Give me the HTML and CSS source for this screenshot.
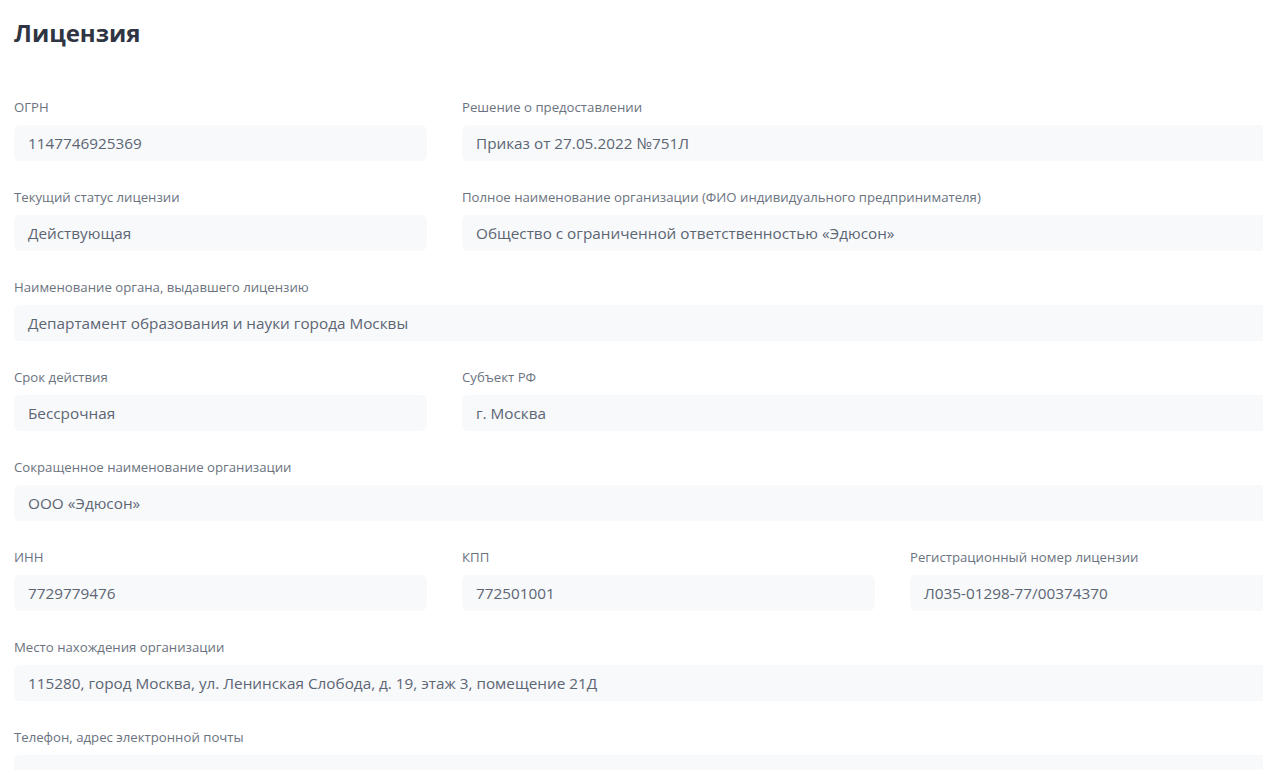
FILE: index.html
```html
<!DOCTYPE html>
<html lang="ru">
<head>
<meta charset="utf-8">
<title>Лицензия</title>
<link rel="stylesheet" href="styles.css">
</head>
<body>
<div class="page">
  <h1 class="title">Лицензия</h1>
  <div class="grid">
    <div class="field"><div class="label">ОГРН</div><div class="value">1147746925369</div></div>
    <div class="field span2"><div class="label">Решение о предоставлении</div><div class="value">Приказ от 27.05.2022 №751Л</div></div>

    <div class="field"><div class="label">Текущий статус лицензии</div><div class="value">Действующая</div></div>
    <div class="field span2"><div class="label">Полное наименование организации (ФИО индивидуального предпринимателя)</div><div class="value">Общество с ограниченной ответственностью «Эдюсон»</div></div>

    <div class="field span3"><div class="label">Наименование органа, выдавшего лицензию</div><div class="value">Департамент образования и науки города Москвы</div></div>

    <div class="field"><div class="label">Срок действия</div><div class="value">Бессрочная</div></div>
    <div class="field span2"><div class="label">Субъект РФ</div><div class="value">г. Москва</div></div>

    <div class="field span3"><div class="label">Сокращенное наименование организации</div><div class="value">ООО «Эдюсон»</div></div>

    <div class="field"><div class="label">ИНН</div><div class="value">7729779476</div></div>
    <div class="field"><div class="label">КПП</div><div class="value">772501001</div></div>
    <div class="field"><div class="label">Регистрационный номер лицензии</div><div class="value">Л035-01298-77/00374370</div></div>

    <div class="field span3"><div class="label">Место нахождения организации</div><div class="value">115280, город Москва, ул. Ленинская Слобода, д. 19, этаж 3, помещение 21Д</div></div>

    <div class="field span3"><div class="label">Телефон, адрес электронной почты</div><div class="value"></div></div>
  </div>
</div>
</body>
</html>
```
FILE: styles.css
```css
html, body {
  margin: 0;
  padding: 0;
  background: #ffffff;
  overflow: hidden;
}
body {
  font-family: "Open Sans", "Noto Sans", sans-serif;
}
.page {
  padding: 17px 0 0 14px;
  width: 1309px;
}
.title {
  margin: 0 0 49px 0;
  font-size: 24px;
  line-height: 32px;
  font-weight: 700;
  color: #2f3542;
}
.grid {
  display: grid;
  grid-template-columns: 413px 413px 413px;
  column-gap: 35px;
  row-gap: 27px;
}
.span2 { grid-column: span 2; }
.span3 { grid-column: span 3; }
.label {
  font-size: 13.2px;
  line-height: 18px;
  color: #6b7380;
  margin-bottom: 9px;
  white-space: nowrap;
}
.value {
  height: 36px;
  box-sizing: border-box;
  background: #f8f9fb;
  border-radius: 6px;
  padding: 0 14px;
  font-size: 15.3px;
  line-height: 36px;
  color: #5c6573;
  white-space: nowrap;
}
```
